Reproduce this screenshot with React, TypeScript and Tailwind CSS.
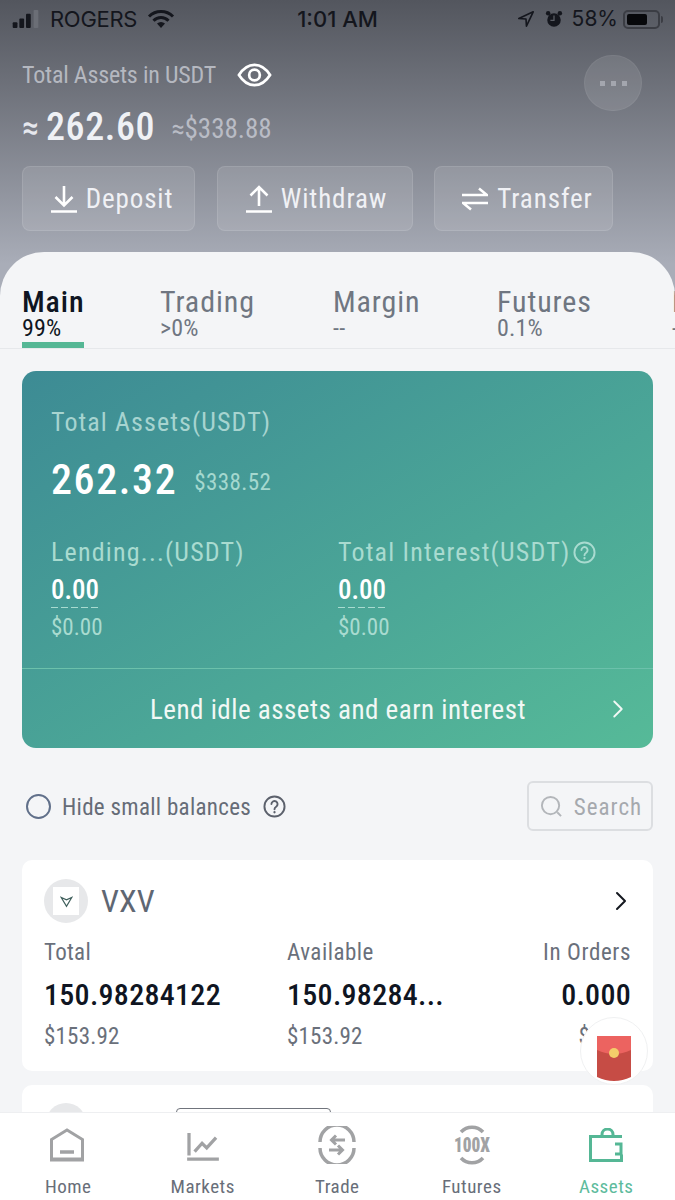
import { ChevronRight } from "lucide-react";

const tabs = [
  { name: "Main", share: "99%", width: "w-[138px]", active: true },
  { name: "Trading", share: ">0%", width: "w-[173px]", active: false },
  { name: "Margin", share: "--", width: "w-[164px]", active: false },
  { name: "Futures", share: "0.1%", width: "w-[175px]", active: false },
  { name: "Loan", share: "--", width: "w-[60px]", active: false },
];

const HelpIcon = ({ className }: { className: string }) => (
  <svg viewBox="0 0 24 24" fill="none" stroke="currentColor" strokeWidth="2" className={className}>
    <circle cx="12" cy="12" r="10.5" />
    <path d="M8.800 9.500a3.200 3.200 0 1 1 4.900 2.700c-1.100.7-1.700 1.300-1.700 2.600" strokeLinecap="round" />
    <circle cx="12" cy="18" r="1.200" fill="currentColor" stroke="none" />
  </svg>
);

// dashed rule under the lending figures
const Dashes = () => (
  <div className="h-px w-[48px] bg-[repeating-linear-gradient(90deg,#a9dbd0_0_7px,transparent_7px_10px)]" />
);

const LendingFigure = () => (
  <>
    <div className="mt-[6px] text-[27px] font-medium leading-[34px] text-white">0.00</div>
    <Dashes />
    <div className="mt-[5px] text-[23px] leading-[30px] text-[#a9dbd0]">$0.00</div>
  </>
);

const StatusBar = () => (
  <div className="flex h-[38px] items-center justify-between pl-[12px] pr-[12px] font-['Inter',sans-serif] text-[21px] text-[#14161d] [font-stretch:100%]">
    <div className="flex w-[200px] items-center">
      <svg viewBox="0 0 28 20" className="h-[19px] w-[28px]">
        <rect x="0" y="13" width="5" height="6" rx="1" fill="#14161d" />
        <rect x="7" y="9" width="5" height="10" rx="1" fill="#14161d" />
        <rect x="14" y="4" width="5" height="15" rx="1" fill="#14161d" />
        <rect x="22" y="0" width="5" height="19" rx="1" fill="#6b6e76" />
      </svg>
      <span className="ml-[10px] text-[22px] tracking-[-0.3px]">ROGERS</span>
      <svg viewBox="0 0 28 20" className="ml-[10px] h-[20px] w-[28px]">
        <path d="M14 19l-4-4.500a6 6 0 0 1 8 0z" fill="#14161d" />
        <path d="M2 7.500a17 17 0 0 1 24 0M6.500 11.700a10.500 10.500 0 0 1 15 0" fill="none" stroke="#14161d" strokeWidth="3" />
      </svg>
    </div>
    <span className="text-[22px] font-medium">1:01 AM</span>
    <div className="flex w-[200px] items-center justify-end">
      <svg viewBox="0 0 20 20" fill="none" stroke="#14161d" strokeWidth="1.800" className="h-[18px] w-[18px]">
        <path d="M18 2L2 9.500l8 .5.500 8z" strokeLinejoin="round" />
      </svg>
      <svg viewBox="0 0 20 20" className="ml-[10px] h-[20px] w-[18px]">
        <circle cx="10" cy="11" r="7.500" fill="#14161d" />
        <circle cx="3.500" cy="3.500" r="2.500" fill="#14161d" />
        <circle cx="16.500" cy="3.500" r="2.500" fill="#14161d" />
        <path d="M10 6v5.500H6" stroke="#5a5d65" strokeWidth="1.400" fill="none" />
      </svg>
      <span className="ml-[9px]">58%</span>
      <div className="ml-[5px] flex h-[19px] w-[37px] items-center rounded-[5px] border-2 border-[#3b3d44] p-[2px]">
        <div className="h-full w-[20px] rounded-[2px] bg-[#07080b]" />
      </div>
      <div className="ml-[1px] h-[7px] w-[2px] rounded-r-sm bg-[#3b3d44]" />
    </div>
  </div>
);

const Header = () => (
  <div className="h-[214px] pl-[22px] pr-[33px]">
    <div className="flex justify-between">
      <div>
        <div className="mt-[21px] flex h-[32px] items-center">
          <span className="w-[194px] whitespace-nowrap text-[24px] tracking-[-0.2px] text-[#b5b8c0]">Total Assets in USDT</span>
          <svg viewBox="0 0 36 26" fill="none" stroke="white" className="ml-[21px] h-[26px] w-[35px]">
            <path d="M2 13C7 5 12 2.500 18 2.500S29 5 34 13c-5 8-10 10.500-16 10.500S7 21 2 13z" strokeWidth="2.800" />
            <circle cx="18" cy="13" r="5.500" strokeWidth="2.800" />
          </svg>
        </div>
        <div className="mt-[15px] flex h-[42px] items-center">
          <span className="text-[34px] font-medium text-[#e6e8ee]">≈</span>
          <span className="ml-[7px] text-[38px] font-medium tracking-[0.6px] text-[#eff1f5]">262.60</span>
          <span className="ml-[16px] mt-[4px] text-[27px] text-[#b9bcc5]">≈$338.88</span>
        </div>
      </div>
      <div className="mt-[17px] flex h-[56px] w-[58px] items-center justify-center gap-[6px] rounded-full border border-white/5 bg-white/10">
        <i className="size-[5px] bg-[#a3a6ae]" />
        <i className="size-[5px] bg-[#a3a6ae]" />
        <i className="size-[5px] bg-[#a3a6ae]" />
      </div>
    </div>
    <div className="mt-[18px] flex text-[27px] tracking-[0.9px] text-[#f0f1f5]">
      <button className="flex h-[65px] w-[173px] items-center justify-center gap-[9px] rounded-[8px] border border-white/10 bg-white/10 pl-[7px]">
        <svg viewBox="0 0 26 28" fill="none" stroke="white" strokeWidth="2.600" className="h-[28px] w-[26px]">
          <path d="M13 1v19M4.500 12L13 20.500 21.500 12M0 26.500h26" />
        </svg>
        <span className="mt-[2px]">Deposit</span>
      </button>
      <button className="ml-[22px] flex h-[65px] w-[196px] items-center justify-center gap-[9px] rounded-[8px] border border-white/10 bg-white/10 pl-[3px]">
        <svg viewBox="0 0 26 28" fill="none" stroke="white" strokeWidth="2.600" className="h-[28px] w-[26px]">
          <path d="M13 21V2M4.500 10.500L13 2l8.500 8.500M0 26.500h26" />
        </svg>
        <span className="mt-[2px]">Withdraw</span>
      </button>
      <button className="ml-[21px] flex h-[65px] w-[179px] items-center justify-center gap-[9px] rounded-[8px] border border-white/10 bg-white/10 pl-[8px]">
        <svg viewBox="0 0 26 24" fill="none" stroke="white" strokeWidth="2.600" className="h-[24px] w-[26px]">
          <path d="M0 8h25L17 1.500M26 16H1l8 6.500" />
        </svg>
        <span className="mt-[2px]">Transfer</span>
      </button>
    </div>
  </div>
);

const Tabs = () => (
  <div className="flex h-[97px] overflow-hidden border-b border-[#e6e8eb] pl-[22px] pt-[33px]">
    {tabs.map((tab) => (
      <div key={tab.name} className={`${tab.width} shrink-0`}>
        <div className="inline-block">
          <div className={`text-[30px] leading-[33px] tracking-[0.9px] ${tab.active ? "font-medium text-[#0f1522]" : "text-[#6f7681]"}`}>
            {tab.name}
          </div>
          <div className={`text-[24px] leading-[20px] tracking-[0.2px] ${tab.active ? "text-[#0f1522]" : "text-[#6f7681]"}`}>
            {tab.share}
          </div>
          {tab.active && <div className="mt-[4px] h-[7px] bg-[#55b795]" />}
        </div>
      </div>
    ))}
  </div>
);

const LendingCard = () => (
  <div className="mx-[22px] mt-[22px] h-[377px] overflow-hidden rounded-[14px] bg-gradient-to-br from-[#3d8b94] to-[#56ba98]">
    <div className="h-[297px] pl-[29px] pt-[36px]">
      <div className="text-[26px] leading-[30px] tracking-[1.1px] text-[#a7d4d0]">Total Assets(USDT)</div>
      <div className="mt-[19px] flex h-[46px] items-center">
        <span className="text-[42px] font-medium tracking-[1.6px] text-white">262.32</span>
        <span className="ml-[17px] mt-[8px] text-[23px] tracking-[0.4px] text-[#a5d8cf]">$338.52</span>
      </div>
      <div className="mt-[35px] flex">
        <div className="w-[287px]">
          <div className="text-[26px] leading-[30px] tracking-[1.2px] text-[#a9dbd0]">Lending...(USDT)</div>
          <LendingFigure />
        </div>
        <div>
          <div className="flex items-center gap-[3px] text-[26px] leading-[30px] tracking-[1.2px] text-[#a9dbd0]">
            Total Interest(USDT)
            <HelpIcon className="size-[23px]" />
          </div>
          <LendingFigure />
        </div>
      </div>
    </div>
    <div className="flex h-[80px] items-center border-t border-[#6cc1ab] pl-[128px] pr-[20px] text-[27px] tracking-[0.5px] text-[#f1f8f5]">
      <span className="mt-[3px]">Lend idle assets and earn interest</span>
      <ChevronRight className="ml-auto size-[30px]" strokeWidth={1.5} />
    </div>
  </div>
);

const BalanceFilter = () => (
  <div className="mx-[22px] mt-[33px] flex h-[50px] items-center">
    <div className="ml-[4px] size-[25px] rounded-full border-2 border-[#61708a]" />
    <span className="ml-[11px] mt-[4px] text-[23px] tracking-[0.3px] text-[#666c77]">Hide small balances</span>
    <HelpIcon className="ml-[12px] size-[23px] text-[#5c616c]" />
    <div className="ml-auto flex h-[50px] w-[126px] items-center justify-center gap-[11px] rounded-[6px] border-2 border-[#dcdee1] pl-[2px] text-[23px] tracking-[1px] text-[#a6a9ae]">
      <svg viewBox="0 0 24 24" fill="none" stroke="#b3b6ba" strokeWidth="2" className="size-[23px]">
        <circle cx="11" cy="11" r="9" />
        <path d="M18 18l4 4" />
      </svg>
      <span className="mt-[4px]">Search</span>
    </div>
  </div>
);

const AssetCard = () => (
  <div className="mx-[22px] mt-[29px] h-[211px] rounded-[10px] bg-white pl-[22px] pr-[22px] pt-[19px]">
    <div className="flex h-[44px] items-center">
      <div className="flex size-[44px] items-center justify-center rounded-full bg-[#e7e8ea]">
        <div className="flex h-[28px] w-[26px] items-center justify-center bg-white">
          <svg viewBox="0 0 16 16" fill="none" stroke="#3f5f5c" strokeWidth="1.500" className="size-[13px]">
            <path d="M1.500 3L8 14 14.500 3 8 6z" />
          </svg>
        </div>
      </div>
      <span className="ml-[13px] text-[32px] leading-none text-[#5f6773]">VXV</span>
      <ChevronRight className="ml-auto -mr-[6px] size-[32px] text-[#14181f]" strokeWidth={1.5} />
    </div>
    <div className="mt-[15px] flex">
      <div className="w-[243px]">
        <div className="text-[23px] leading-[30px] tracking-[0.3px] text-[#6a707b]">Total</div>
        <div className="mt-[9px] text-[30px] font-medium leading-[36px] tracking-[0.3px] text-[#0f1522]">150.98284122</div>
        <div className="mt-[9px] text-[23px] leading-[30px] tracking-[0.2px] text-[#6a707b]">$153.92</div>
      </div>
      <div className="w-[200px]">
        <div className="text-[23px] leading-[30px] tracking-[0.5px] text-[#6a707b]">Available</div>
        <div className="mt-[9px] whitespace-nowrap text-[30px] font-medium leading-[36px] tracking-[0.3px] text-[#0f1522]">150.98284...</div>
        <div className="mt-[9px] text-[23px] leading-[30px] tracking-[0.2px] text-[#6a707b]">$153.92</div>
      </div>
      <div className="flex-1 text-right">
        <div className="whitespace-nowrap text-[23px] leading-[30px] tracking-[0.6px] text-[#6a707b]">In Orders</div>
        <div className="mt-[9px] text-[30px] font-medium leading-[36px] tracking-[0.3px] text-[#0f1522]">0.000</div>
        <div className="mt-[9px] text-[23px] leading-[30px] tracking-[0.2px] text-[#6a707b]">$0.00</div>
      </div>
    </div>
  </div>
);

const NextAssetCard = () => (
  <div className="mx-[22px] mt-[14px] h-[120px] rounded-[10px] bg-white pl-[24px] pt-[18px]">
    <div className="flex">
      <div className="size-[40px] rounded-full bg-[#e7e8ea]" />
      <div className="ml-[90px] mt-[5px] h-[40px] w-[155px] rounded-[4px] border border-[#70747c]" />
    </div>
  </div>
);

const navIcons = {
  Home: (
    <svg viewBox="0 0 34 34" fill="none" stroke="#a1a2a4" strokeWidth="3" className="-ml-[2px] size-[34px]">
      <path d="M1.500 31V11.500L17 2l15.500 9.500V31" />
      <path d="M0 31.500h34" strokeWidth="4" />
      <path d="M10 24h14" strokeWidth="3.500" />
    </svg>
  ),
  Markets: (
    <svg viewBox="0 0 34 30" fill="none" stroke="#a1a2a4" strokeWidth="3.500" className="mt-[3px] h-[28px] w-[34px]">
      <path d="M2 0v24M0 28h34M8 20l8-9 5 5 10-11" />
    </svg>
  ),
  Trade: (
    <svg viewBox="0 0 38 38" fill="none" stroke="#a1a2a4" strokeWidth="3.500" className="size-[38px]">
      <path d="M2 16a17 17 0 0 1 34 0M2 22a17 17 0 0 0 34 0" />
      <path d="M27 14H14M18 9.500L13.500 14l4.500 4.500M11 24h13M20 19.500L24.500 24 20 28.500" strokeWidth="3" />
    </svg>
  ),
  Futures: (
    <svg viewBox="0 0 38 38" fill="none" stroke="#a1a2a4" strokeWidth="3.500" className="size-[38px] overflow-visible">
      <path d="M8 6a15 15 0 0 1 22 0M8 32a15 15 0 0 0 22 0" />
      <text x="19" y="26" textAnchor="middle" fill="#a1a2a4" stroke="none" fontSize="21" fontWeight="900" fontFamily="Roboto, sans-serif" textLength="36" lengthAdjust="spacingAndGlyphs">100X</text>
    </svg>
  ),
  Assets: (
    <svg viewBox="0 0 34 34" fill="none" stroke="#55b795" strokeWidth="3" className="size-[34px]">
      <path d="M33 8.500H1.500v24h31v-6M26 16h6v10h-6M13 8V6.500a5.500 5.500 0 0 1 11 0V8" />
    </svg>
  ),
};

const BottomNav = () => (
  <div className="flex h-[88px] shrink-0 border-t border-[#eeeff1] bg-white pl-[1px]">
    {(["Home", "Markets", "Trade", "Futures", "Assets"] as const).map((name) => (
      <div key={name} className="flex w-[134.5px] flex-col items-center">
        <div className="mt-[12px] flex h-[40px] items-center justify-center">{navIcons[name]}</div>
        <span className={`mt-[11px] text-[19px] leading-[22px] tracking-[0.5px] ${name === "Assets" ? "text-[#5dbb9c]" : "text-[#686e79]"}`}>{name}</span>
      </div>
    ))}
  </div>
);

export default function App() {
  return (
    <div className="relative flex h-[1200px] w-[675px] flex-col overflow-hidden bg-gradient-to-b from-[#53565e] from-0% to-[#a9adb8] to-[22%] font-['Roboto',sans-serif] [font-stretch:80%]">
      <StatusBar />
      <Header />
      <div className="min-h-0 flex-1 overflow-hidden rounded-t-[44px] bg-[#f4f5f7]">
        <Tabs />
        <LendingCard />
        <BalanceFilter />
        <AssetCard />
        <NextAssetCard />
      </div>
      <BottomNav />
      {/* red packet floating over the list */}
      <div className="absolute left-[580px] top-[1017px] flex size-[68px] items-center justify-center rounded-full border border-[#f0f1f2] bg-white">
        <svg viewBox="0 0 34 46" className="mt-[16px] h-[46px] w-[34px]">
          <path d="M0 0h34v41q-17 8-34 0z" fill="#c64c45" />
          <path d="M0 0h34v14q-17 8-34 0z" fill="#ec6360" />
          <circle cx="17" cy="17" r="5" fill="#f4cd6a" />
        </svg>
      </div>
    </div>
  );
}
